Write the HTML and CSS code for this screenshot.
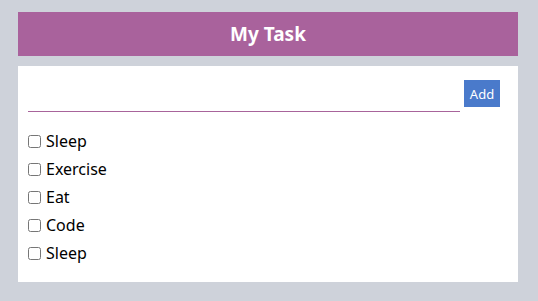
FILE: index.html
```html
<!DOCTYPE html>
<html>
<head>
<meta charset="utf-8">
<link rel="stylesheet" href="styles.css">
</head>
<body>
<div class="app">
  <header class="header"><h1 class="title">My Task</h1></header>
  <main class="card">
    <form class="add-row">
      <input class="task-input" type="text">
      <button class="add-btn" type="button">Add</button>
    </form>
    <ul class="task-list">
      <li class="task"><input class="check" type="checkbox"><span>Sleep</span></li>
      <li class="task"><input class="check" type="checkbox"><span>Exercise</span></li>
      <li class="task"><input class="check" type="checkbox"><span>Eat</span></li>
      <li class="task"><input class="check" type="checkbox"><span>Code</span></li>
      <li class="task"><input class="check" type="checkbox"><span>Sleep</span></li>
    </ul>
  </main>
</div>
</body>
</html>
```

FILE: styles.css
```css
html, body {
  margin: 0;
  padding: 0;
}
body {
  background: #ced2da;
  font-family: "Noto Sans", "Open Sans", sans-serif;
  color: #000;
}
.app {
  padding: 12px 20px 12px 18px;
  display: flex;
  flex-direction: column;
  gap: 10px;
}
.header {
  height: 44px;
  background: #a9629c;
  display: flex;
  align-items: center;
  justify-content: center;
}
.title {
  margin: 0;
  color: #fff;
  font-size: 19px;
  font-weight: 700;
}
.card {
  background: #fff;
  padding: 14px 18px 14px 10px;
}
.add-row {
  display: flex;
  align-items: flex-start;
  gap: 4px;
  margin: 0;
}
.task-input {
  flex: 1;
  height: 32px;
  box-sizing: border-box;
  border: none;
  border-bottom: 1px solid #a8649b;
  outline: none;
  padding: 0;
  font: inherit;
  margin-bottom: 0;
}
.add-btn {
  width: 36px;
  height: 27px;
  border: none;
  background: #4a7acb;
  color: #fff;
  font-family: inherit;
  font-size: 13px;
  padding: 0;
}
.task-list {
  list-style: none;
  margin: 15px 0 0;
  padding: 0 0 1px;
}
.task {
  height: 28px;
  display: flex;
  align-items: center;
  font-size: 16px;
}
.check {
  margin: 0 5px 0 0;
  width: 13px;
  height: 13px;
}
```
